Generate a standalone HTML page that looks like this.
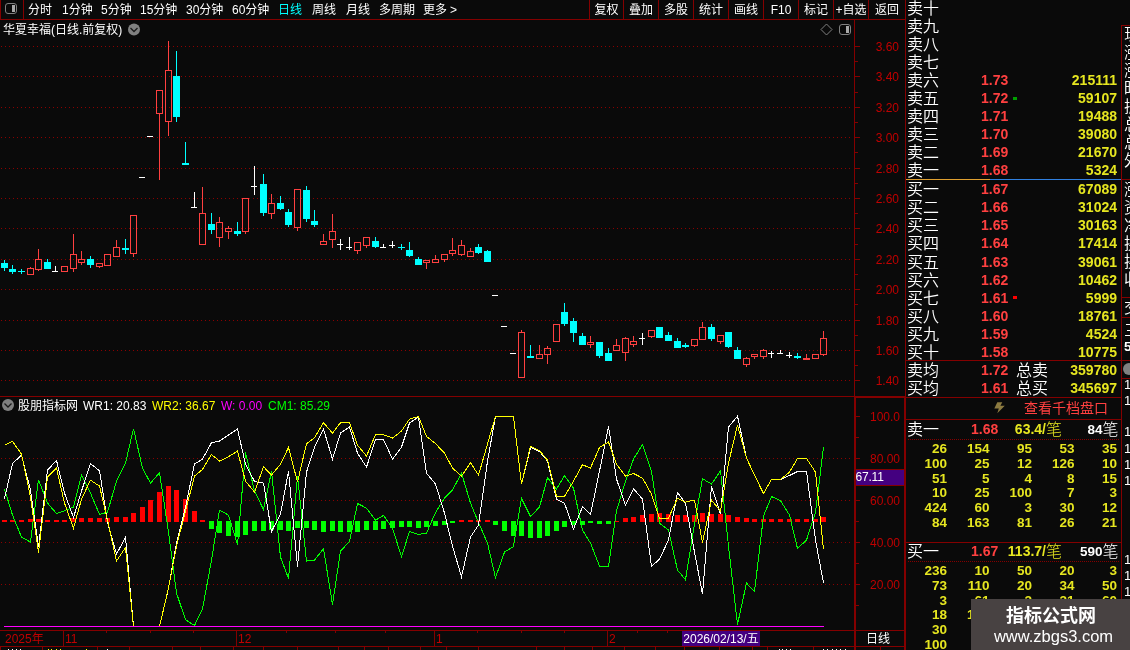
<!DOCTYPE html>
<html lang="zh"><head><meta charset="utf-8"><title>华夏幸福</title>
<style>
html,body{margin:0;padding:0}
body{width:1130px;height:650px;overflow:hidden;position:relative;background:#0a0a0a;color:#fff;
font-family:"Liberation Sans","Noto Sans CJK SC",sans-serif;font-size:12px;line-height:14px}
.t{position:absolute;white-space:nowrap}
.s{font-weight:300}
.ax{color:#c00000;width:45px;text-align:right;left:854px}
.k{font-size:16px;line-height:18px;font-weight:350;left:907px}
.p{font-size:14px;line-height:18px;font-weight:bold;color:#ff4040}
.v{font-size:14px;line-height:18px;font-weight:bold;color:#e6e620;text-align:right;width:100px;left:1017px}
.n{font-size:13.5px;line-height:15px;font-weight:bold;color:#e6e620;text-align:right;width:42px}
.e{font-size:16px;line-height:18px;font-weight:350;left:1124px}
</style></head><body>

<svg width="1130" height="650" viewBox="0 0 1130 650" style="position:absolute;left:0;top:0" shape-rendering="crispEdges">
<g stroke="#8c0000" stroke-width="1" stroke-dasharray="1 3">
<line x1="1" x2="851" y1="46.5" y2="46.5"/>
<line x1="1" x2="851" y1="76.5" y2="76.5"/>
<line x1="1" x2="851" y1="107.5" y2="107.5"/>
<line x1="1" x2="851" y1="137.5" y2="137.5"/>
<line x1="1" x2="851" y1="168.5" y2="168.5"/>
<line x1="1" x2="851" y1="198.5" y2="198.5"/>
<line x1="1" x2="851" y1="228.5" y2="228.5"/>
<line x1="1" x2="851" y1="259.5" y2="259.5"/>
<line x1="1" x2="851" y1="289.5" y2="289.5"/>
<line x1="1" x2="851" y1="320.5" y2="320.5"/>
<line x1="1" x2="851" y1="350.5" y2="350.5"/>
<line x1="1" x2="851" y1="380.5" y2="380.5"/>
<line x1="1" x2="851" y1="458.5" y2="458.5"/>
<line x1="1" x2="851" y1="500.5" y2="500.5"/>
<line x1="1" x2="851" y1="542.5" y2="542.5"/>
<line x1="1" x2="851" y1="584.5" y2="584.5"/>
</g>
<g fill="#840000">
<rect x="0" y="19" width="905" height="1"/>
<rect x="0" y="0" width="1" height="20"/>
<rect x="23" y="0" width="1" height="19"/>
<rect x="589" y="0" width="1" height="19"/>
<rect x="623" y="0" width="1" height="19"/>
<rect x="658" y="0" width="1" height="19"/>
<rect x="693" y="0" width="1" height="19"/>
<rect x="728" y="0" width="1" height="19"/>
<rect x="763" y="0" width="1" height="19"/>
<rect x="798" y="0" width="1" height="19"/>
<rect x="833" y="0" width="1" height="19"/>
<rect x="868" y="0" width="1" height="19"/>
<rect x="854" y="19" width="1" height="378"/>
<rect x="854" y="397" width="2" height="253"/>
<rect x="905" y="0" width="1" height="397"/>
<rect x="904" y="397" width="2" height="253"/>
<rect x="0" y="396" width="906" height="1"/>
<rect x="856" y="397" width="266" height="1"/>
<rect x="0" y="630" width="905" height="1"/>
<rect x="0" y="646" width="905" height="1"/>
<rect x="1121" y="25" width="1" height="625"/>
<rect x="1121" y="25" width="9" height="1"/>
<rect x="856" y="469" width="48" height="1"/>
<rect x="856" y="485" width="48" height="1"/>
<rect x="855" y="46" width="5" height="1"/>
<rect x="855" y="61" width="3" height="1"/>
<rect x="855" y="76" width="5" height="1"/>
<rect x="855" y="92" width="3" height="1"/>
<rect x="855" y="107" width="5" height="1"/>
<rect x="855" y="122" width="3" height="1"/>
<rect x="855" y="137" width="5" height="1"/>
<rect x="855" y="152" width="3" height="1"/>
<rect x="855" y="168" width="5" height="1"/>
<rect x="855" y="183" width="3" height="1"/>
<rect x="855" y="198" width="5" height="1"/>
<rect x="855" y="213" width="3" height="1"/>
<rect x="855" y="228" width="5" height="1"/>
<rect x="855" y="244" width="3" height="1"/>
<rect x="855" y="259" width="5" height="1"/>
<rect x="855" y="274" width="3" height="1"/>
<rect x="855" y="289" width="5" height="1"/>
<rect x="855" y="304" width="3" height="1"/>
<rect x="855" y="320" width="5" height="1"/>
<rect x="855" y="335" width="3" height="1"/>
<rect x="855" y="350" width="5" height="1"/>
<rect x="855" y="365" width="3" height="1"/>
<rect x="855" y="380" width="5" height="1"/>
<rect x="856" y="416" width="4" height="1"/>
<rect x="856" y="437" width="3" height="1"/>
<rect x="856" y="458" width="4" height="1"/>
<rect x="856" y="479" width="3" height="1"/>
<rect x="856" y="500" width="4" height="1"/>
<rect x="856" y="521" width="3" height="1"/>
<rect x="856" y="542" width="4" height="1"/>
<rect x="856" y="563" width="3" height="1"/>
<rect x="856" y="584" width="4" height="1"/>
<rect x="856" y="605" width="3" height="1"/>
<rect x="63" y="631" width="1" height="15"/>
<rect x="236" y="631" width="1" height="15"/>
<rect x="434" y="631" width="1" height="15"/>
<rect x="607" y="631" width="1" height="15"/>
<rect x="106" y="631" width="1" height="2"/>
<rect x="150" y="631" width="1" height="2"/>
<rect x="193" y="631" width="1" height="2"/>
<rect x="286" y="631" width="1" height="2"/>
<rect x="335" y="631" width="1" height="2"/>
<rect x="385" y="631" width="1" height="2"/>
<rect x="477" y="631" width="1" height="2"/>
<rect x="521" y="631" width="1" height="2"/>
<rect x="564" y="631" width="1" height="2"/>
<rect x="637" y="631" width="1" height="2"/>
<rect x="667" y="631" width="1" height="2"/>
<rect x="0" y="647" width="1" height="3"/>
<rect x="42" y="647" width="1" height="3"/>
<rect x="97" y="647" width="1" height="3"/>
<rect x="129" y="647" width="1" height="3"/>
<rect x="172" y="647" width="1" height="3"/>
<rect x="200" y="647" width="1" height="3"/>
<rect x="233" y="647" width="1" height="3"/>
<rect x="263" y="647" width="1" height="3"/>
<rect x="297" y="647" width="1" height="3"/>
<rect x="338" y="647" width="1" height="3"/>
<rect x="364" y="647" width="1" height="3"/>
<rect x="388" y="647" width="1" height="3"/>
<rect x="420" y="647" width="1" height="3"/>
<rect x="446" y="647" width="1" height="3"/>
<rect x="478" y="647" width="1" height="3"/>
<rect x="536" y="647" width="1" height="3"/>
<rect x="564" y="647" width="1" height="3"/>
<rect x="592" y="647" width="1" height="3"/>
<rect x="624" y="647" width="1" height="3"/>
<rect x="655" y="647" width="1" height="3"/>
<rect x="684" y="647" width="1" height="3"/>
<rect x="719" y="647" width="1" height="3"/>
<rect x="752" y="647" width="1" height="3"/>
<rect x="767" y="647" width="1" height="3"/>
<rect x="813" y="647" width="1" height="3"/>
<rect x="855" y="647" width="1" height="3"/>
<rect x="880" y="647" width="1" height="3"/>
</g>
<rect x="8" y="649" width="1" height="1" fill="#fff"/>
<rect x="12" y="649" width="1" height="1" fill="#fff"/>
<rect x="16" y="649" width="1" height="1" fill="#fff"/>
<rect x="20" y="649" width="1" height="1" fill="#fff"/>
<rect x="107" y="649" width="1" height="1" fill="#fff"/>
<rect x="779" y="649" width="1" height="1" fill="#fff"/>
<rect x="782" y="649" width="1" height="1" fill="#fff"/>
<rect x="786" y="649" width="1" height="1" fill="#fff"/>
<rect x="790" y="649" width="1" height="1" fill="#fff"/>
<rect x="823" y="649" width="1" height="1" fill="#fff"/>
<rect x="827" y="649" width="1" height="1" fill="#fff"/>
<rect x="832" y="649" width="1" height="1" fill="#fff"/>
<rect x="836" y="649" width="1" height="1" fill="#fff"/>
<rect x="840" y="649" width="1" height="1" fill="#fff"/>
<rect x="845" y="649" width="1" height="1" fill="#fff"/>
<rect x="48" y="649" width="1" height="1" fill="#ffff00"/>
<rect x="51" y="649" width="1" height="1" fill="#ffff00"/>
<rect x="56" y="649" width="1" height="1" fill="#ffff00"/>
<rect x="60" y="649" width="1" height="1" fill="#ffff00"/>
<rect x="86" y="649" width="1" height="1" fill="#ffff00"/>
<rect x="4" y="260" width="1" height="11" fill="#00ffff"/>
<rect x="1" y="263" width="7" height="5" fill="#00ffff"/>
<rect x="12" y="265" width="1" height="9" fill="#00ffff"/>
<rect x="9" y="269" width="7" height="3" fill="#00ffff"/>
<rect x="21" y="269" width="1" height="5" fill="#00ffff"/>
<rect x="18" y="271" width="7" height="1" fill="#00ffff"/>
<rect x="30" y="267" width="1" height="1" fill="#ff4040"/>
<rect x="30" y="274" width="1" height="1" fill="#ff4040"/>
<rect x="27.5" y="268.5" width="6" height="6" fill="none" stroke="#ff4040"/>
<rect x="38" y="249" width="1" height="10" fill="#ff4040"/>
<rect x="38" y="269" width="1" height="2" fill="#ff4040"/>
<rect x="35.5" y="259.5" width="6" height="10" fill="none" stroke="#ff4040"/>
<rect x="47" y="259" width="1" height="10" fill="#00ffff"/>
<rect x="44" y="262" width="7" height="7" fill="#00ffff"/>
<rect x="55" y="266" width="1" height="6" fill="#fff"/>
<rect x="52" y="271" width="6" height="1" fill="#fff"/>
<rect x="64" y="266" width="1" height="0" fill="#ff4040"/>
<rect x="64" y="271" width="1" height="1" fill="#ff4040"/>
<rect x="61.5" y="266.5" width="6" height="5" fill="none" stroke="#ff4040"/>
<rect x="73" y="234" width="1" height="20" fill="#ff4040"/>
<rect x="73" y="268" width="1" height="4" fill="#ff4040"/>
<rect x="70.5" y="254.5" width="6" height="14" fill="none" stroke="#ff4040"/>
<rect x="81" y="251" width="1" height="8" fill="#ff4040"/>
<rect x="81" y="262" width="1" height="3" fill="#ff4040"/>
<rect x="78.5" y="259.5" width="6" height="3" fill="none" stroke="#ff4040"/>
<rect x="90" y="256" width="1" height="12" fill="#00ffff"/>
<rect x="87" y="259" width="7" height="6" fill="#00ffff"/>
<rect x="99" y="263" width="1" height="0" fill="#ff4040"/>
<rect x="99" y="266" width="1" height="2" fill="#ff4040"/>
<rect x="96.5" y="263.5" width="6" height="3" fill="none" stroke="#ff4040"/>
<rect x="107" y="254" width="1" height="0" fill="#ff4040"/>
<rect x="107" y="265" width="1" height="1" fill="#ff4040"/>
<rect x="104.5" y="254.5" width="6" height="11" fill="none" stroke="#ff4040"/>
<rect x="116" y="240" width="1" height="7" fill="#ff4040"/>
<rect x="116" y="256" width="1" height="1" fill="#ff4040"/>
<rect x="113.5" y="247.5" width="6" height="9" fill="none" stroke="#ff4040"/>
<rect x="125" y="239" width="1" height="15" fill="#00ffff"/>
<rect x="122" y="248" width="7" height="2" fill="#00ffff"/>
<rect x="133" y="215" width="1" height="0" fill="#ff4040"/>
<rect x="133" y="253" width="1" height="4" fill="#ff4040"/>
<rect x="130.5" y="215.5" width="6" height="38" fill="none" stroke="#ff4040"/>
<rect x="139" y="177" width="6" height="1" fill="#fff"/>
<rect x="147" y="136" width="6" height="1" fill="#fff"/>
<rect x="159" y="90" width="1" height="0" fill="#ff4040"/>
<rect x="159" y="113" width="1" height="67" fill="#ff4040"/>
<rect x="156.5" y="90.5" width="6" height="23" fill="none" stroke="#ff4040"/>
<rect x="168" y="41" width="1" height="29" fill="#ff4040"/>
<rect x="168" y="121" width="1" height="15" fill="#ff4040"/>
<rect x="165.5" y="70.5" width="6" height="51" fill="none" stroke="#ff4040"/>
<rect x="176" y="51" width="1" height="71" fill="#00ffff"/>
<rect x="173" y="76" width="7" height="41" fill="#00ffff"/>
<rect x="185" y="142" width="1" height="23" fill="#00ffff"/>
<rect x="182" y="163" width="7" height="2" fill="#00ffff"/>
<rect x="194" y="192" width="1" height="16" fill="#fff"/>
<rect x="191" y="207" width="6" height="1" fill="#fff"/>
<rect x="202" y="187" width="1" height="26" fill="#ff4040"/>
<rect x="202" y="244" width="1" height="1" fill="#ff4040"/>
<rect x="199.5" y="213.5" width="6" height="31" fill="none" stroke="#ff4040"/>
<rect x="211" y="213" width="1" height="21" fill="#00ffff"/>
<rect x="208" y="224" width="7" height="6" fill="#00ffff"/>
<rect x="219" y="217" width="1" height="5" fill="#ff4040"/>
<rect x="219" y="237" width="1" height="10" fill="#ff4040"/>
<rect x="216.5" y="222.5" width="6" height="15" fill="none" stroke="#ff4040"/>
<rect x="228" y="226" width="1" height="2" fill="#ff4040"/>
<rect x="228" y="231" width="1" height="8" fill="#ff4040"/>
<rect x="225.5" y="228.5" width="6" height="3" fill="none" stroke="#ff4040"/>
<rect x="237" y="222" width="1" height="14" fill="#00ffff"/>
<rect x="234" y="231" width="7" height="3" fill="#00ffff"/>
<rect x="245" y="198" width="1" height="0" fill="#ff4040"/>
<rect x="245" y="231" width="1" height="3" fill="#ff4040"/>
<rect x="242.5" y="198.5" width="6" height="33" fill="none" stroke="#ff4040"/>
<rect x="254" y="166" width="1" height="29" fill="#fff"/>
<rect x="251" y="186" width="6" height="1" fill="#fff"/>
<rect x="263" y="174" width="1" height="42" fill="#00ffff"/>
<rect x="260" y="184" width="7" height="29" fill="#00ffff"/>
<rect x="271" y="194" width="1" height="9" fill="#ff4040"/>
<rect x="271" y="213" width="1" height="6" fill="#ff4040"/>
<rect x="268.5" y="203.5" width="6" height="10" fill="none" stroke="#ff4040"/>
<rect x="280" y="196" width="1" height="14" fill="#00ffff"/>
<rect x="277" y="203" width="7" height="6" fill="#00ffff"/>
<rect x="288" y="209" width="1" height="18" fill="#00ffff"/>
<rect x="285" y="212" width="7" height="13" fill="#00ffff"/>
<rect x="297" y="189" width="1" height="0" fill="#ff4040"/>
<rect x="297" y="227" width="1" height="4" fill="#ff4040"/>
<rect x="294.5" y="189.5" width="6" height="38" fill="none" stroke="#ff4040"/>
<rect x="306" y="186" width="1" height="36" fill="#00ffff"/>
<rect x="303" y="190" width="7" height="29" fill="#00ffff"/>
<rect x="314" y="210" width="1" height="17" fill="#00ffff"/>
<rect x="311" y="221" width="7" height="4" fill="#00ffff"/>
<rect x="323" y="234" width="1" height="7" fill="#ff4040"/>
<rect x="323" y="244" width="1" height="1" fill="#ff4040"/>
<rect x="320.5" y="241.5" width="6" height="3" fill="none" stroke="#ff4040"/>
<rect x="332" y="214" width="1" height="17" fill="#ff4040"/>
<rect x="332" y="239" width="1" height="9" fill="#ff4040"/>
<rect x="329.5" y="231.5" width="6" height="8" fill="none" stroke="#ff4040"/>
<rect x="340" y="239" width="1" height="11" fill="#fff"/>
<rect x="337" y="244" width="6" height="1" fill="#fff"/>
<rect x="349" y="237" width="1" height="13" fill="#fff"/>
<rect x="346" y="247" width="6" height="1" fill="#fff"/>
<rect x="357" y="242" width="1" height="0" fill="#ff4040"/>
<rect x="357" y="250" width="1" height="4" fill="#ff4040"/>
<rect x="354.5" y="242.5" width="6" height="8" fill="none" stroke="#ff4040"/>
<rect x="366" y="237" width="1" height="0" fill="#ff4040"/>
<rect x="366" y="245" width="1" height="3" fill="#ff4040"/>
<rect x="363.5" y="237.5" width="6" height="8" fill="none" stroke="#ff4040"/>
<rect x="375" y="237" width="1" height="11" fill="#00ffff"/>
<rect x="372" y="241" width="7" height="6" fill="#00ffff"/>
<rect x="383" y="244" width="1" height="4" fill="#fff"/>
<rect x="380" y="247" width="6" height="1" fill="#fff"/>
<rect x="392" y="241" width="1" height="7" fill="#fff"/>
<rect x="389" y="245" width="6" height="1" fill="#fff"/>
<rect x="401" y="244" width="1" height="6" fill="#00ffff"/>
<rect x="398" y="247" width="7" height="1" fill="#00ffff"/>
<rect x="409" y="242" width="1" height="15" fill="#00ffff"/>
<rect x="406" y="250" width="7" height="6" fill="#00ffff"/>
<rect x="418" y="257" width="1" height="8" fill="#00ffff"/>
<rect x="415" y="259" width="7" height="6" fill="#00ffff"/>
<rect x="426" y="260" width="1" height="0" fill="#ff4040"/>
<rect x="426" y="262" width="1" height="7" fill="#ff4040"/>
<rect x="423.5" y="260.5" width="6" height="2" fill="none" stroke="#ff4040"/>
<rect x="435" y="255" width="1" height="4" fill="#ff4040"/>
<rect x="435" y="262" width="1" height="1" fill="#ff4040"/>
<rect x="432.5" y="259.5" width="6" height="3" fill="none" stroke="#ff4040"/>
<rect x="444" y="254" width="1" height="0" fill="#ff4040"/>
<rect x="444" y="259" width="1" height="3" fill="#ff4040"/>
<rect x="441.5" y="254.5" width="6" height="5" fill="none" stroke="#ff4040"/>
<rect x="452" y="238" width="1" height="12" fill="#ff4040"/>
<rect x="452" y="253" width="1" height="3" fill="#ff4040"/>
<rect x="449.5" y="250.5" width="6" height="3" fill="none" stroke="#ff4040"/>
<rect x="461" y="240" width="1" height="5" fill="#ff4040"/>
<rect x="461" y="254" width="1" height="2" fill="#ff4040"/>
<rect x="458.5" y="245.5" width="6" height="9" fill="none" stroke="#ff4040"/>
<rect x="470" y="248" width="1" height="3" fill="#ff4040"/>
<rect x="470" y="256" width="1" height="1" fill="#ff4040"/>
<rect x="467.5" y="251.5" width="6" height="5" fill="none" stroke="#ff4040"/>
<rect x="478" y="244" width="1" height="10" fill="#00ffff"/>
<rect x="475" y="247" width="7" height="6" fill="#00ffff"/>
<rect x="487" y="250" width="1" height="12" fill="#00ffff"/>
<rect x="484" y="251" width="7" height="11" fill="#00ffff"/>
<rect x="492" y="295" width="6" height="1" fill="#fff"/>
<rect x="501" y="326" width="6" height="1" fill="#fff"/>
<rect x="510" y="353" width="6" height="1" fill="#fff"/>
<rect x="521" y="330" width="1" height="2" fill="#ff4040"/>
<rect x="521" y="377" width="1" height="1" fill="#ff4040"/>
<rect x="518.5" y="332.5" width="6" height="45" fill="none" stroke="#ff4040"/>
<rect x="530" y="345" width="1" height="13" fill="#00ffff"/>
<rect x="527" y="356" width="7" height="2" fill="#00ffff"/>
<rect x="539" y="345" width="1" height="9" fill="#ff4040"/>
<rect x="539" y="358" width="1" height="1" fill="#ff4040"/>
<rect x="536.5" y="354.5" width="6" height="4" fill="none" stroke="#ff4040"/>
<rect x="547" y="346" width="1" height="2" fill="#ff4040"/>
<rect x="547" y="354" width="1" height="10" fill="#ff4040"/>
<rect x="544.5" y="348.5" width="6" height="6" fill="none" stroke="#ff4040"/>
<rect x="556" y="324" width="1" height="0" fill="#ff4040"/>
<rect x="556" y="341" width="1" height="1" fill="#ff4040"/>
<rect x="553.5" y="324.5" width="6" height="17" fill="none" stroke="#ff4040"/>
<rect x="564" y="303" width="1" height="23" fill="#00ffff"/>
<rect x="561" y="312" width="7" height="12" fill="#00ffff"/>
<rect x="573" y="318" width="1" height="24" fill="#00ffff"/>
<rect x="570" y="321" width="7" height="12" fill="#00ffff"/>
<rect x="582" y="333" width="1" height="12" fill="#00ffff"/>
<rect x="579" y="336" width="7" height="9" fill="#00ffff"/>
<rect x="590" y="336" width="1" height="6" fill="#ff4040"/>
<rect x="590" y="344" width="1" height="4" fill="#ff4040"/>
<rect x="587.5" y="342.5" width="6" height="2" fill="none" stroke="#ff4040"/>
<rect x="599" y="342" width="1" height="16" fill="#00ffff"/>
<rect x="596" y="342" width="7" height="14" fill="#00ffff"/>
<rect x="608" y="348" width="1" height="13" fill="#00ffff"/>
<rect x="605" y="353" width="7" height="8" fill="#00ffff"/>
<rect x="616" y="339" width="1" height="6" fill="#ff4040"/>
<rect x="616" y="350" width="1" height="1" fill="#ff4040"/>
<rect x="613.5" y="345.5" width="6" height="5" fill="none" stroke="#ff4040"/>
<rect x="625" y="337" width="1" height="1" fill="#ff4040"/>
<rect x="625" y="352" width="1" height="9" fill="#ff4040"/>
<rect x="622.5" y="338.5" width="6" height="14" fill="none" stroke="#ff4040"/>
<rect x="633" y="336" width="1" height="5" fill="#ff4040"/>
<rect x="633" y="344" width="1" height="3" fill="#ff4040"/>
<rect x="630.5" y="341.5" width="6" height="3" fill="none" stroke="#ff4040"/>
<rect x="642" y="333" width="1" height="12" fill="#fff"/>
<rect x="639" y="338" width="6" height="1" fill="#fff"/>
<rect x="651" y="330" width="1" height="0" fill="#ff4040"/>
<rect x="651" y="336" width="1" height="2" fill="#ff4040"/>
<rect x="648.5" y="330.5" width="6" height="6" fill="none" stroke="#ff4040"/>
<rect x="659" y="327" width="1" height="11" fill="#00ffff"/>
<rect x="656" y="327" width="7" height="11" fill="#00ffff"/>
<rect x="668" y="332" width="1" height="9" fill="#00ffff"/>
<rect x="665" y="335" width="7" height="6" fill="#00ffff"/>
<rect x="677" y="338" width="1" height="10" fill="#00ffff"/>
<rect x="674" y="341" width="7" height="7" fill="#00ffff"/>
<rect x="685" y="343" width="1" height="5" fill="#00ffff"/>
<rect x="682" y="345" width="7" height="2" fill="#00ffff"/>
<rect x="694" y="339" width="1" height="0" fill="#ff4040"/>
<rect x="694" y="345" width="1" height="2" fill="#ff4040"/>
<rect x="691.5" y="339.5" width="6" height="6" fill="none" stroke="#ff4040"/>
<rect x="702" y="322" width="1" height="5" fill="#ff4040"/>
<rect x="702" y="339" width="1" height="1" fill="#ff4040"/>
<rect x="699.5" y="327.5" width="6" height="12" fill="none" stroke="#ff4040"/>
<rect x="711" y="324" width="1" height="17" fill="#00ffff"/>
<rect x="708" y="327" width="7" height="12" fill="#00ffff"/>
<rect x="720" y="335" width="1" height="0" fill="#ff4040"/>
<rect x="720" y="341" width="1" height="3" fill="#ff4040"/>
<rect x="717.5" y="335.5" width="6" height="6" fill="none" stroke="#ff4040"/>
<rect x="728" y="332" width="1" height="16" fill="#00ffff"/>
<rect x="725" y="332" width="7" height="15" fill="#00ffff"/>
<rect x="737" y="347" width="1" height="12" fill="#00ffff"/>
<rect x="734" y="350" width="7" height="9" fill="#00ffff"/>
<rect x="746" y="357" width="1" height="1" fill="#ff4040"/>
<rect x="746" y="364" width="1" height="3" fill="#ff4040"/>
<rect x="743.5" y="358.5" width="6" height="6" fill="none" stroke="#ff4040"/>
<rect x="754" y="354" width="1" height="0" fill="#ff4040"/>
<rect x="754" y="356" width="1" height="3" fill="#ff4040"/>
<rect x="751.5" y="354.5" width="6" height="2" fill="none" stroke="#ff4040"/>
<rect x="763" y="349" width="1" height="1" fill="#ff4040"/>
<rect x="763" y="356" width="1" height="3" fill="#ff4040"/>
<rect x="760.5" y="350.5" width="6" height="6" fill="none" stroke="#ff4040"/>
<rect x="771" y="351" width="1" height="7" fill="#fff"/>
<rect x="768" y="353" width="6" height="1" fill="#fff"/>
<rect x="780" y="350" width="1" height="4" fill="#fff"/>
<rect x="777" y="353" width="6" height="1" fill="#fff"/>
<rect x="789" y="352" width="1" height="6" fill="#fff"/>
<rect x="786" y="355" width="6" height="1" fill="#fff"/>
<rect x="797" y="353" width="1" height="6" fill="#00ffff"/>
<rect x="794" y="356" width="7" height="2" fill="#00ffff"/>
<rect x="806" y="354" width="1" height="6" fill="#ff4040"/>
<rect x="803" y="358" width="7" height="2" fill="#ff4040"/>
<rect x="815" y="354" width="1" height="0" fill="#ff4040"/>
<rect x="815" y="358" width="1" height="1" fill="#ff4040"/>
<rect x="812.5" y="354.5" width="6" height="4" fill="none" stroke="#ff4040"/>
<rect x="823" y="331" width="1" height="7" fill="#ff4040"/>
<rect x="823" y="354" width="1" height="2" fill="#ff4040"/>
<rect x="820.5" y="338.5" width="6" height="16" fill="none" stroke="#ff4040"/>
<rect x="2" y="520" width="5" height="2" fill="#ff0000"/>
<rect x="10" y="520" width="5" height="2" fill="#ff0000"/>
<rect x="19" y="520" width="5" height="2" fill="#ff0000"/>
<rect x="28" y="519" width="5" height="3" fill="#ff0000"/>
<rect x="36" y="519" width="5" height="3" fill="#ff0000"/>
<rect x="45" y="520" width="5" height="2" fill="#ff0000"/>
<rect x="54" y="520" width="5" height="2" fill="#ff0000"/>
<rect x="62" y="520" width="5" height="2" fill="#ff0000"/>
<rect x="71" y="518" width="5" height="4" fill="#ff0000"/>
<rect x="79" y="518" width="5" height="4" fill="#ff0000"/>
<rect x="88" y="518" width="5" height="4" fill="#ff0000"/>
<rect x="97" y="518" width="5" height="4" fill="#ff0000"/>
<rect x="105" y="518" width="5" height="4" fill="#ff0000"/>
<rect x="114" y="517" width="5" height="5" fill="#ff0000"/>
<rect x="123" y="517" width="5" height="5" fill="#ff0000"/>
<rect x="131" y="513" width="5" height="9" fill="#ff0000"/>
<rect x="140" y="507" width="5" height="15" fill="#ff0000"/>
<rect x="148" y="500" width="5" height="22" fill="#ff0000"/>
<rect x="157" y="492" width="5" height="30" fill="#ff0000"/>
<rect x="166" y="486" width="5" height="36" fill="#ff0000"/>
<rect x="174" y="490" width="5" height="32" fill="#ff0000"/>
<rect x="183" y="499" width="5" height="23" fill="#ff0000"/>
<rect x="192" y="511" width="5" height="11" fill="#ff0000"/>
<rect x="200" y="520" width="5" height="2" fill="#ff0000"/>
<rect x="209" y="521" width="5" height="8" fill="#00ff00"/>
<rect x="217" y="521" width="5" height="12" fill="#00ff00"/>
<rect x="226" y="521" width="5" height="15" fill="#00ff00"/>
<rect x="235" y="521" width="5" height="16" fill="#00ff00"/>
<rect x="243" y="521" width="5" height="14" fill="#00ff00"/>
<rect x="252" y="521" width="5" height="10" fill="#00ff00"/>
<rect x="261" y="521" width="5" height="10" fill="#00ff00"/>
<rect x="269" y="521" width="5" height="9" fill="#00ff00"/>
<rect x="278" y="521" width="5" height="9" fill="#00ff00"/>
<rect x="286" y="521" width="5" height="10" fill="#00ff00"/>
<rect x="295" y="521" width="5" height="7" fill="#00ff00"/>
<rect x="304" y="521" width="5" height="7" fill="#00ff00"/>
<rect x="312" y="521" width="5" height="9" fill="#00ff00"/>
<rect x="321" y="521" width="5" height="11" fill="#00ff00"/>
<rect x="330" y="521" width="5" height="10" fill="#00ff00"/>
<rect x="338" y="521" width="5" height="11" fill="#00ff00"/>
<rect x="347" y="521" width="5" height="11" fill="#00ff00"/>
<rect x="355" y="521" width="5" height="11" fill="#00ff00"/>
<rect x="364" y="521" width="5" height="9" fill="#00ff00"/>
<rect x="373" y="521" width="5" height="9" fill="#00ff00"/>
<rect x="381" y="521" width="5" height="8" fill="#00ff00"/>
<rect x="390" y="521" width="5" height="7" fill="#00ff00"/>
<rect x="399" y="521" width="5" height="6" fill="#00ff00"/>
<rect x="407" y="521" width="5" height="6" fill="#00ff00"/>
<rect x="416" y="521" width="5" height="7" fill="#00ff00"/>
<rect x="424" y="521" width="5" height="6" fill="#00ff00"/>
<rect x="433" y="521" width="5" height="5" fill="#00ff00"/>
<rect x="442" y="521" width="5" height="4" fill="#00ff00"/>
<rect x="450" y="521" width="5" height="2" fill="#00ff00"/>
<rect x="459" y="520" width="5" height="2" fill="#ff0000"/>
<rect x="468" y="520" width="5" height="2" fill="#ff0000"/>
<rect x="476" y="520" width="5" height="2" fill="#ff0000"/>
<rect x="485" y="520" width="5" height="2" fill="#ff0000"/>
<rect x="493" y="521" width="5" height="4" fill="#00ff00"/>
<rect x="502" y="521" width="5" height="10" fill="#00ff00"/>
<rect x="511" y="521" width="5" height="15" fill="#00ff00"/>
<rect x="519" y="521" width="5" height="15" fill="#00ff00"/>
<rect x="528" y="521" width="5" height="17" fill="#00ff00"/>
<rect x="537" y="521" width="5" height="17" fill="#00ff00"/>
<rect x="545" y="521" width="5" height="15" fill="#00ff00"/>
<rect x="554" y="521" width="5" height="10" fill="#00ff00"/>
<rect x="562" y="521" width="5" height="6" fill="#00ff00"/>
<rect x="571" y="521" width="5" height="4" fill="#00ff00"/>
<rect x="580" y="521" width="5" height="4" fill="#00ff00"/>
<rect x="588" y="521" width="5" height="2" fill="#00ff00"/>
<rect x="597" y="521" width="5" height="3" fill="#00ff00"/>
<rect x="606" y="521" width="5" height="3" fill="#00ff00"/>
<rect x="614" y="521" width="5" height="1" fill="#ff0000"/>
<rect x="623" y="518" width="5" height="4" fill="#ff0000"/>
<rect x="631" y="517" width="5" height="5" fill="#ff0000"/>
<rect x="640" y="515" width="5" height="7" fill="#ff0000"/>
<rect x="649" y="514" width="5" height="8" fill="#ff0000"/>
<rect x="657" y="513" width="5" height="9" fill="#ff0000"/>
<rect x="666" y="514" width="5" height="8" fill="#ff0000"/>
<rect x="675" y="515" width="5" height="7" fill="#ff0000"/>
<rect x="683" y="515" width="5" height="7" fill="#ff0000"/>
<rect x="692" y="515" width="5" height="7" fill="#ff0000"/>
<rect x="700" y="513" width="5" height="9" fill="#ff0000"/>
<rect x="709" y="514" width="5" height="8" fill="#ff0000"/>
<rect x="718" y="514" width="5" height="8" fill="#ff0000"/>
<rect x="726" y="515" width="5" height="7" fill="#ff0000"/>
<rect x="735" y="517" width="5" height="5" fill="#ff0000"/>
<rect x="744" y="518" width="5" height="4" fill="#ff0000"/>
<rect x="752" y="519" width="5" height="3" fill="#ff0000"/>
<rect x="761" y="519" width="5" height="3" fill="#ff0000"/>
<rect x="769" y="519" width="5" height="3" fill="#ff0000"/>
<rect x="778" y="519" width="5" height="3" fill="#ff0000"/>
<rect x="787" y="519" width="5" height="3" fill="#ff0000"/>
<rect x="795" y="519" width="5" height="3" fill="#ff0000"/>
<rect x="804" y="519" width="5" height="3" fill="#ff0000"/>
<rect x="813" y="519" width="5" height="3" fill="#ff0000"/>
<rect x="821" y="517" width="5" height="5" fill="#ff0000"/>
<clipPath id="cp"><rect x="0" y="398" width="854" height="229"/></clipPath>
<g clip-path="url(#cp)">
<polyline points="4.5,489.1 12.5,515.1 21.5,537.1 30.5,542.1 38.5,479.7 47.5,503.1 56.5,513.5 64.5,510.7 73.5,507.1 81.5,474.7 90.5,493.1 99.5,514.5 107.5,512.1 116.5,481.1 125.5,463.1 133.5,428.7 142.5,468.1 150.5,483.1 159.5,472.7 168.5,532.1 176.5,593.1 185.5,619.7 194.5,625.5 202.5,609.1 211.5,560.1 219.5,510.1 228.5,515.1 237.5,544.5 245.5,452.5 254.5,491.1 263.5,509.5 271.5,471.5 280.5,557.1 288.5,578.5 297.5,476.1 306.5,561.1 314.5,560.1 323.5,548.7 332.5,604.5 340.5,551.1 349.5,541.5 357.5,503.5 366.5,508.1 375.5,520.1 383.5,515.5 392.5,528.1 401.5,556.7 409.5,531.5 418.5,534.5 426.5,533.1 435.5,512.6 444.5,498.1 452.5,490.1 461.5,473.1 470.5,503.1 478.5,522.6 487.5,543.1 495.5,577.7 504.5,552.1 513.5,546.5 521.5,498.5 530.5,516.5 539.5,507.1 547.5,477.7 556.5,489.1 564.5,475.7 573.5,488.1 582.5,530.1 590.5,543.1 599.5,566.1 608.5,566.1 616.5,511.1 625.5,481.1 633.5,459.1 642.5,444.5 651.5,471.6 659.5,523.1 668.5,530.1 677.5,570.1 685.5,579.7 694.5,524.1 702.5,478.7 711.5,484.1 720.5,470.7 728.5,546.1 737.5,624.5 746.5,583.1 754.5,591.7 763.5,516.1 771.5,496.5 780.5,500.7 789.5,515.1 797.5,548.5 806.5,540.1 815.5,512.1 823.5,447.4" fill="none" stroke="#00ff00" stroke-width="1"/>
<polyline points="4.5,498.6 12.5,463.6 21.5,455.1 30.5,490.1 38.5,547.1 47.5,470.1 56.5,460.5 64.5,493.1 73.5,517.5 81.5,491.1 90.5,463.7 99.5,470.7 107.5,522.1 116.5,554.1 125.5,537.5 133.5,626.5 142.5,626.5 150.5,626.5 159.5,626.5 168.5,588.1 176.5,543.1 185.5,507.1 194.5,464.1 202.5,459.1 211.5,442.7 219.5,441.1 228.5,435.1 237.5,429.1 245.5,464.1 254.5,481.5 263.5,483.1 271.5,531.5 280.5,514.1 288.5,471.1 297.5,566.5 306.5,472.1 314.5,447.1 323.5,429.1 332.5,459.1 340.5,433.1 349.5,427.1 357.5,453.1 366.5,467.1 375.5,439.5 383.5,439.5 392.5,459.1 401.5,447.1 409.5,423.1 418.5,417.1 426.5,473.1 435.5,484.1 444.5,513.1 452.5,546.1 461.5,576.7 470.5,537.1 478.5,525.1 487.5,461.1 495.5,416.5 504.5,416.5 513.5,416.5 521.5,484.1 530.5,447.5 539.5,451.5 547.5,461.1 556.5,499.1 564.5,503.1 573.5,529.1 582.5,506.7 590.5,514.6 599.5,471.1 608.5,426.5 616.5,479.1 625.5,505.1 633.5,488.7 642.5,499.1 651.5,566.5 659.5,559.1 668.5,540.1 677.5,492.7 685.5,503.1 694.5,552.1 702.5,594.1 711.5,486.1 720.5,514.1 728.5,427.1 737.5,416.1 746.5,458.1 754.5,475.1 763.5,493.5 771.5,479.5 780.5,479.5 789.5,475.5 797.5,471.5 806.5,471.5 815.5,540.1 823.5,582.8" fill="none" stroke="#ffffff" stroke-width="1"/>
<polyline points="4.5,445.1 12.5,441.5 21.5,454.1 30.5,497.1 38.5,552.5 47.5,477.1 56.5,468.1 64.5,503.1 73.5,528.1 81.5,499.1 90.5,480.1 99.5,486.1 107.5,520.1 116.5,561.1 125.5,547.5 133.5,626.5 142.5,626.5 150.5,626.5 159.5,626.5 168.5,588.1 176.5,546.1 185.5,511.1 194.5,476.1 202.5,469.5 211.5,454.5 219.5,461.1 228.5,456.7 237.5,451.1 245.5,481.1 254.5,492.1 263.5,466.7 271.5,475.1 280.5,464.1 288.5,447.5 297.5,482.1 306.5,443.7 314.5,437.7 323.5,422.7 332.5,433.1 340.5,422.7 349.5,422.7 357.5,445.1 366.5,456.1 375.5,434.7 383.5,434.7 392.5,438.1 401.5,431.1 409.5,419.1 418.5,416.5 426.5,436.5 435.5,443.6 444.5,453.1 452.5,468.1 461.5,476.1 470.5,462.7 478.5,475.1 487.5,444.1 495.5,416.5 504.5,416.5 513.5,416.5 521.5,484.1 530.5,446.1 539.5,450.7 547.5,460.1 556.5,496.5 564.5,496.5 573.5,481.1 582.5,464.7 590.5,468.1 599.5,447.5 608.5,442.1 616.5,464.1 625.5,476.1 633.5,473.5 642.5,478.1 651.5,494.1 659.5,518.1 668.5,518.1 677.5,498.1 685.5,502.1 694.5,500.1 702.5,542.5 711.5,500.1 720.5,511.1 728.5,463.1 737.5,425.1 746.5,458.1 754.5,475.1 763.5,493.5 771.5,479.5 780.5,479.5 789.5,472.1 797.5,458.5 806.5,458.5 815.5,472.1 823.5,549.5" fill="none" stroke="#ffff00" stroke-width="1"/>
</g>
<rect x="4" y="626" width="820" height="1" fill="#ff00ff"/>
</svg>
<div id="tx" style="position:absolute;left:0;top:0;width:1130px;height:650px;will-change:transform">
<div class="t " style="left:28px;top:3px;">分时</div>
<div class="t " style="left:62px;top:3px;">1分钟</div>
<div class="t " style="left:101px;top:3px;">5分钟</div>
<div class="t " style="left:140px;top:3px;">15分钟</div>
<div class="t " style="left:186px;top:3px;">30分钟</div>
<div class="t " style="left:232px;top:3px;">60分钟</div>
<div class="t " style="left:278px;top:3px;color:#00ffff">日线</div>
<div class="t " style="left:312px;top:3px;">周线</div>
<div class="t " style="left:346px;top:3px;">月线</div>
<div class="t " style="left:379px;top:3px;">多周期</div>
<div class="t " style="left:423px;top:3px;">更多</div>
<div class="t " style="left:450px;top:3px;">&gt;</div>
<div class="t" style="left:590px;top:3px;width:33px;text-align:center">复权</div>
<div class="t" style="left:624px;top:3px;width:34px;text-align:center">叠加</div>
<div class="t" style="left:659px;top:3px;width:34px;text-align:center">多股</div>
<div class="t" style="left:694px;top:3px;width:34px;text-align:center">统计</div>
<div class="t" style="left:729px;top:3px;width:34px;text-align:center">画线</div>
<div class="t" style="left:764px;top:3px;width:34px;text-align:center">F10</div>
<div class="t" style="left:799px;top:3px;width:34px;text-align:center">标记</div>
<div class="t" style="left:834px;top:3px;width:34px;text-align:center">+自选</div>
<div class="t" style="left:869px;top:3px;width:36px;text-align:center">返回</div>
<div class="t " style="left:3px;top:23px;">华夏幸福(日线.前复权)</div>
<svg class="t" style="left:0;top:0" width="905" height="420" viewBox="0 0 905 420">
<rect x="5.5" y="3.5" width="11" height="10" rx="2.5" fill="none" stroke="#808080"/><rect x="12" y="5" width="3" height="7" fill="#a8a8a8"/>
<rect x="839.5" y="24.5" width="11" height="10" rx="2.5" fill="none" stroke="#808080"/><rect x="846" y="26" width="3" height="7" fill="#a8a8a8"/>
<path d="M821 29.5 L826.5 24 L832 29.5 L826.5 35 Z" fill="none" stroke="#808080"/>
<circle cx="134" cy="29.5" r="6" fill="#808080"/><path d="M130.5 28 L134 31.5 L137.5 28" fill="none" stroke="#1a1a1a" stroke-width="1.3"/>
<circle cx="8" cy="405" r="6" fill="#808080"/><path d="M4.5 403.5 L8 407 L11.5 403.5" fill="none" stroke="#1a1a1a" stroke-width="1.3"/>
</svg>
<div class="t ax" style="left:854px;top:40px;">3.60</div>
<div class="t ax" style="left:854px;top:70px;">3.40</div>
<div class="t ax" style="left:854px;top:101px;">3.20</div>
<div class="t ax" style="left:854px;top:131px;">3.00</div>
<div class="t ax" style="left:854px;top:162px;">2.80</div>
<div class="t ax" style="left:854px;top:192px;">2.60</div>
<div class="t ax" style="left:854px;top:222px;">2.40</div>
<div class="t ax" style="left:854px;top:253px;">2.20</div>
<div class="t ax" style="left:854px;top:283px;">2.00</div>
<div class="t ax" style="left:854px;top:314px;">1.80</div>
<div class="t ax" style="left:854px;top:344px;">1.60</div>
<div class="t ax" style="left:854px;top:374px;">1.40</div>
<div class="t ax" style="left:855px;top:410px;left:855px">100.0</div>
<div class="t ax" style="left:855px;top:452px;left:855px">80.00</div>
<div class="t ax" style="left:855px;top:494px;left:855px">60.00</div>
<div class="t ax" style="left:855px;top:536px;left:855px">40.00</div>
<div class="t ax" style="left:855px;top:578px;left:855px">20.00</div>
<div class="t" style="left:856px;top:470px;width:48px;height:15px;background:#440080;line-height:15px;letter-spacing:-0.2px;text-indent:-0.5px">67.11</div>
<div class="t " style="left:18px;top:399px;">股朋指标网</div>
<div class="t " style="left:83px;top:399px;">WR1: 20.83</div>
<div class="t " style="left:152px;top:399px;color:#ffff00">WR2: 36.67</div>
<div class="t " style="left:221px;top:399px;color:#ff00ff">W: 0.00</div>
<div class="t " style="left:268px;top:399px;color:#00ff00">CM1: 85.29</div>
<div class="t " style="left:5px;top:632px;color:#c00000">2025年</div>
<div class="t " style="left:65px;top:632px;color:#c00000">11</div>
<div class="t " style="left:238px;top:632px;color:#c00000">12</div>
<div class="t " style="left:436px;top:632px;color:#c00000">1</div>
<div class="t " style="left:609px;top:632px;color:#c00000">2</div>
<div class="t" style="left:682px;top:631px;width:78px;height:15px;background:#440080;line-height:17px;text-align:center;overflow:hidden">2026/02/13/五</div>
<div class="t " style="left:866px;top:632px;">日线</div>
<div class="t k" style="left:907px;top:-0.5px;">卖十</div>
<div class="t k" style="left:907px;top:17.5px;">卖九</div>
<div class="t k" style="left:907px;top:35.5px;">卖八</div>
<div class="t k" style="left:907px;top:53.6px;">卖七</div>
<div class="t k" style="left:907px;top:71.6px;">卖六</div>
<div class="t p" style="left:981px;top:70.6px;">1.73</div>
<div class="t v" style="left:1017px;top:70.6px;">215111</div>
<div class="t k" style="left:907px;top:89.6px;">卖五</div>
<div class="t p" style="left:981px;top:88.6px;">1.72</div>
<div class="t v" style="left:1017px;top:88.6px;">59107</div>
<div class="t k" style="left:907px;top:107.6px;">卖四</div>
<div class="t p" style="left:981px;top:106.6px;">1.71</div>
<div class="t v" style="left:1017px;top:106.6px;">19488</div>
<div class="t k" style="left:907px;top:125.6px;">卖三</div>
<div class="t p" style="left:981px;top:124.6px;">1.70</div>
<div class="t v" style="left:1017px;top:124.6px;">39080</div>
<div class="t k" style="left:907px;top:143.7px;">卖二</div>
<div class="t p" style="left:981px;top:142.7px;">1.69</div>
<div class="t v" style="left:1017px;top:142.7px;">21670</div>
<div class="t k" style="left:907px;top:161.7px;">卖一</div>
<div class="t p" style="left:981px;top:160.7px;">1.68</div>
<div class="t v" style="left:1017px;top:160.7px;">5324</div>
<div class="t k" style="left:907px;top:181.1px;">买一</div>
<div class="t p" style="left:981px;top:180.1px;">1.67</div>
<div class="t v" style="left:1017px;top:180.1px;">67089</div>
<div class="t k" style="left:907px;top:199.2px;">买二</div>
<div class="t p" style="left:981px;top:198.2px;">1.66</div>
<div class="t v" style="left:1017px;top:198.2px;">31024</div>
<div class="t k" style="left:907px;top:217.3px;">买三</div>
<div class="t p" style="left:981px;top:216.3px;">1.65</div>
<div class="t v" style="left:1017px;top:216.3px;">30163</div>
<div class="t k" style="left:907px;top:235.4px;">买四</div>
<div class="t p" style="left:981px;top:234.4px;">1.64</div>
<div class="t v" style="left:1017px;top:234.4px;">17414</div>
<div class="t k" style="left:907px;top:253.5px;">买五</div>
<div class="t p" style="left:981px;top:252.5px;">1.63</div>
<div class="t v" style="left:1017px;top:252.5px;">39061</div>
<div class="t k" style="left:907px;top:271.6px;">买六</div>
<div class="t p" style="left:981px;top:270.6px;">1.62</div>
<div class="t v" style="left:1017px;top:270.6px;">10462</div>
<div class="t k" style="left:907px;top:289.7px;">买七</div>
<div class="t p" style="left:981px;top:288.7px;">1.61</div>
<div class="t v" style="left:1017px;top:288.7px;">5999</div>
<div class="t k" style="left:907px;top:307.8px;">买八</div>
<div class="t p" style="left:981px;top:306.8px;">1.60</div>
<div class="t v" style="left:1017px;top:306.8px;">18761</div>
<div class="t k" style="left:907px;top:325.9px;">买九</div>
<div class="t p" style="left:981px;top:324.9px;">1.59</div>
<div class="t v" style="left:1017px;top:324.9px;">4524</div>
<div class="t k" style="left:907px;top:344.0px;">买十</div>
<div class="t p" style="left:981px;top:343.0px;">1.58</div>
<div class="t v" style="left:1017px;top:343.0px;">10775</div>
<div class="t" style="left:906px;top:179px;width:84px;height:1px;background:#e0a030"></div>
<div class="t" style="left:990px;top:179px;width:131px;height:1px;background:#3080e0"></div>
<div class="t" style="left:1013px;top:97px;width:4px;height:3px;background:#00a000"></div>
<div class="t" style="left:1013px;top:296px;width:4px;height:3px;background:#ff0000"></div>
<div class="t" style="left:906px;top:360px;width:215px;height:1px;background:#840000"></div>
<div class="t k" style="left:907px;top:362.1px;">卖均</div>
<div class="t p" style="left:981px;top:361.1px;">1.72</div>
<div class="t k" style="left:1016px;top:362.1px;left:1016px">总卖</div>
<div class="t v" style="left:1017px;top:361.1px;">359780</div>
<div class="t k" style="left:907px;top:380.3px;">买均</div>
<div class="t p" style="left:981px;top:379.3px;">1.61</div>
<div class="t k" style="left:1016px;top:380.3px;left:1016px">总买</div>
<div class="t v" style="left:1017px;top:379.3px;">345697</div>
<div class="t" style="left:906px;top:419px;width:215px;height:1px;background:#840000"></div>
<svg class="t" style="left:993px;top:401px" width="14" height="14" viewBox="0 0 14 14"><path d="M4.3 1.2 L9.3 1.2 L7.4 4.7 L11.8 4.7 L4.3 12.3 L5.8 7.4 L1.3 7.4 Z" fill="#8c7a40"/></svg>
<div class="t " style="left:1024px;top:399px;color:#ff4040;font-size:14px;line-height:18px">查看千档盘口</div>
<div class="t k" style="left:907px;top:421px;">卖一</div>
<div class="t p" style="left:971px;top:420px;">1.68</div>
<div class="t" style="left:960px;top:420px;width:102px;text-align:right;font-size:14px;line-height:18px;font-weight:bold;color:#e6e620">63.4/<span style="font-size:16px;font-weight:300;position:relative;top:1px">笔</span></div>
<div class="t" style="left:1018px;top:420px;width:100.5px;text-align:right;font-size:13.5px;line-height:18px;font-weight:bold;color:#fff">84<span style="font-size:16px;font-weight:300;position:relative;top:1px">笔</span></div>
<div class="t" style="left:908px;top:439px;width:211px;height:0;border-top:1px dotted #840000"></div>
<div class="t n" style="left:905.0px;top:441.0px">26</div>
<div class="t n" style="left:947.5px;top:441.0px">154</div>
<div class="t n" style="left:990.0px;top:441.0px">95</div>
<div class="t n" style="left:1032.5px;top:441.0px">53</div>
<div class="t n" style="left:1075.0px;top:441.0px">35</div>
<div class="t n" style="left:905.0px;top:455.8px">100</div>
<div class="t n" style="left:947.5px;top:455.8px">25</div>
<div class="t n" style="left:990.0px;top:455.8px">12</div>
<div class="t n" style="left:1032.5px;top:455.8px">126</div>
<div class="t n" style="left:1075.0px;top:455.8px">10</div>
<div class="t n" style="left:905.0px;top:470.5px">51</div>
<div class="t n" style="left:947.5px;top:470.5px">5</div>
<div class="t n" style="left:990.0px;top:470.5px">4</div>
<div class="t n" style="left:1032.5px;top:470.5px">8</div>
<div class="t n" style="left:1075.0px;top:470.5px">15</div>
<div class="t n" style="left:905.0px;top:485.2px">10</div>
<div class="t n" style="left:947.5px;top:485.2px">25</div>
<div class="t n" style="left:990.0px;top:485.2px">100</div>
<div class="t n" style="left:1032.5px;top:485.2px">7</div>
<div class="t n" style="left:1075.0px;top:485.2px">3</div>
<div class="t n" style="left:905.0px;top:500.0px">424</div>
<div class="t n" style="left:947.5px;top:500.0px">60</div>
<div class="t n" style="left:990.0px;top:500.0px">3</div>
<div class="t n" style="left:1032.5px;top:500.0px">30</div>
<div class="t n" style="left:1075.0px;top:500.0px">12</div>
<div class="t n" style="left:905.0px;top:514.8px">84</div>
<div class="t n" style="left:947.5px;top:514.8px">163</div>
<div class="t n" style="left:990.0px;top:514.8px">81</div>
<div class="t n" style="left:1032.5px;top:514.8px">26</div>
<div class="t n" style="left:1075.0px;top:514.8px">21</div>
<div class="t" style="left:906px;top:542px;width:215px;height:1px;background:#840000"></div>
<div class="t k" style="left:907px;top:543px;">买一</div>
<div class="t p" style="left:971px;top:542px;">1.67</div>
<div class="t" style="left:960px;top:542px;width:102px;text-align:right;font-size:14px;line-height:18px;font-weight:bold;color:#e6e620">113.7/<span style="font-size:16px;font-weight:300;position:relative;top:1px">笔</span></div>
<div class="t" style="left:1018px;top:542px;width:100.5px;text-align:right;font-size:13.5px;line-height:18px;font-weight:bold;color:#fff">590<span style="font-size:16px;font-weight:300;position:relative;top:1px">笔</span></div>
<div class="t" style="left:908px;top:561px;width:211px;height:0;border-top:1px dotted #840000"></div>
<div class="t n" style="left:905.0px;top:563.0px">236</div>
<div class="t n" style="left:947.5px;top:563.0px">10</div>
<div class="t n" style="left:990.0px;top:563.0px">50</div>
<div class="t n" style="left:1032.5px;top:563.0px">20</div>
<div class="t n" style="left:1075.0px;top:563.0px">3</div>
<div class="t n" style="left:905.0px;top:577.8px">73</div>
<div class="t n" style="left:947.5px;top:577.8px">110</div>
<div class="t n" style="left:990.0px;top:577.8px">20</div>
<div class="t n" style="left:1032.5px;top:577.8px">34</div>
<div class="t n" style="left:1075.0px;top:577.8px">50</div>
<div class="t n" style="left:905.0px;top:592.5px">3</div>
<div class="t n" style="left:947.5px;top:592.5px">61</div>
<div class="t n" style="left:990.0px;top:592.5px">2</div>
<div class="t n" style="left:1032.5px;top:592.5px">21</div>
<div class="t n" style="left:1075.0px;top:592.5px">60</div>
<div class="t n" style="left:905.0px;top:607.2px">18</div>
<div class="t n" style="left:947.5px;top:607.2px">100</div>
<div class="t n" style="left:905.0px;top:622.0px">30</div>
<div class="t n" style="left:905.0px;top:636.8px">100</div>
<div class="t e" style="left:1124px;top:26px;">现</div>
<div class="t e" style="left:1124px;top:44px;">涨</div>
<div class="t e" style="left:1124px;top:62px;">涨</div>
<div class="t e" style="left:1124px;top:80px;">昨</div>
<div class="t e" style="left:1124px;top:98px;">振</div>
<div class="t e" style="left:1124px;top:116px;">总</div>
<div class="t e" style="left:1124px;top:134px;">总</div>
<div class="t e" style="left:1124px;top:152px;">外</div>
<div class="t e" style="left:1124px;top:181px;">涨</div>
<div class="t e" style="left:1124px;top:199px;">资</div>
<div class="t e" style="left:1124px;top:217px;">净</div>
<div class="t e" style="left:1124px;top:235px;">换</div>
<div class="t e" style="left:1124px;top:253px;">换</div>
<div class="t e" style="left:1124px;top:271px;">收</div>
<div class="t" style="left:1122px;top:179px;width:8px;height:1px;background:#840000"></div>
<div class="t" style="left:1122px;top:297px;width:8px;height:1px;background:#840000"></div>
<div class="t" style="left:1122px;top:317px;width:8px;height:1px;background:#840000"></div>
<div class="t" style="left:1122px;top:360px;width:8px;height:1px;background:#840000"></div>
<div class="t" style="left:1122px;top:378px;width:8px;height:1px;background:#840000"></div>
<div class="t e" style="left:1124px;top:299px;">交</div>
<div class="t e" style="left:1124px;top:321.5px;">三</div>
<div class="t " style="left:1124px;top:339.5px;font-weight:bold;font-size:13.5px">5</div>
<div class="t" style="left:1123px;top:363px;width:12px;height:12px;border-radius:6px;background:#808080"></div>
<div class="t " style="left:1124px;top:378px;font-size:13px">1</div>
<div class="t " style="left:1124px;top:393.5px;font-size:13px">1</div>
<div class="t " style="left:1124px;top:425px;font-size:13px">1</div>
<div class="t " style="left:1124px;top:441.6px;font-size:13px">1</div>
<div class="t " style="left:1124px;top:457.7px;font-size:13px">1</div>
<div class="t " style="left:1124px;top:473.6px;font-size:13px">1</div>
<div class="t " style="left:1124px;top:553px;font-size:13px">1</div>
<div class="t " style="left:1124px;top:569px;font-size:13px">1</div>
<div class="t " style="left:1124px;top:585px;font-size:13px">1</div>
<div class="t" style="left:971px;top:599px;width:159px;height:51px;background:#484242"></div>
<div class="t" style="left:971px;top:604.5px;width:160px;text-align:center;font-size:18px;line-height:22px;font-weight:bold">指标公式网</div>
<div class="t" style="left:973px;top:627px;width:161px;text-align:center;font-size:16.5px;line-height:18px">www.zbgs3.com</div>
</div>
</body></html>
